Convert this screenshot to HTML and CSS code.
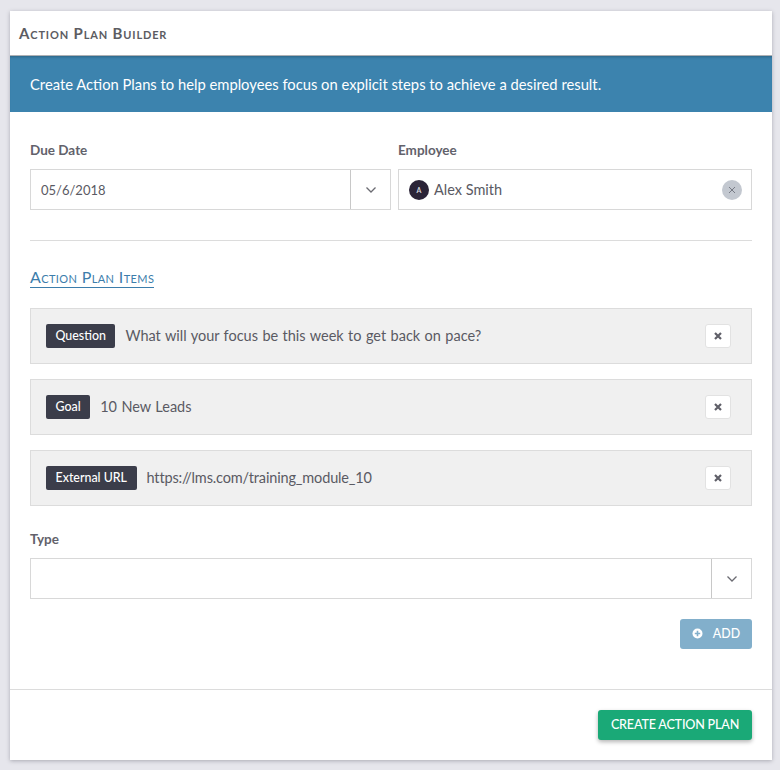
FILE: index.html
```html
<!DOCTYPE html>
<html>
  <head>
    <title>Action Plan Builder</title>
    <link rel="stylesheet" href="styles.css">
  </head>
  <body>
    <div class="card">
      <div class="card-header">Action Plan Builder</div>
      <div class="banner">Create Action Plans to help employees focus on explicit steps to achieve a desired result.</div>
      <div class="card-body">
        <div class="fields">
          <div class="field-date">
            <label class="field-label">Due Date</label>
            <div class="select-box">
              <span class="select-value">05/6/2018</span>
              <span class="select-arrow">
                <svg width="12" height="8" viewBox="0 0 12 8"><path d="M1.5 1.5 L6 6 L10.5 1.5" fill="none" stroke="#6b6b72" stroke-width="1.3"/></svg>
              </span>
            </div>
          </div>
          <div class="field-employee">
            <label class="field-label">Employee</label>
            <div class="select-box employee-box">
              <span class="avatar">A</span>
              <span class="employee-name">Alex Smith</span>
              <span class="clear-btn">
                <svg width="8" height="8" viewBox="0 0 8 8"><path d="M1 1 L7 7 M7 1 L1 7" fill="none" stroke="#777b85" stroke-width="1"/></svg>
              </span>
            </div>
          </div>
        </div>

        <hr class="divider">

        <div class="section-head"><span class="section-title">Action Plan Items</span></div>

        <div class="items">
          <div class="item">
            <span class="tag">Question</span>
            <span class="item-text">What will your focus be this week to get back on pace?</span>
            <span class="remove-btn"><svg width="8" height="8" viewBox="0 0 8 8"><path d="M1 1 L7 7 M7 1 L1 7" fill="none" stroke="#5f5f68" stroke-width="2.2"/></svg></span>
          </div>
          <div class="item">
            <span class="tag">Goal</span>
            <span class="item-text">10 New Leads</span>
            <span class="remove-btn"><svg width="8" height="8" viewBox="0 0 8 8"><path d="M1 1 L7 7 M7 1 L1 7" fill="none" stroke="#5f5f68" stroke-width="2.2"/></svg></span>
          </div>
          <div class="item">
            <span class="tag">External URL</span>
            <span class="item-text item-url">https://lms.com/training_module_10</span>
            <span class="remove-btn"><svg width="8" height="8" viewBox="0 0 8 8"><path d="M1 1 L7 7 M7 1 L1 7" fill="none" stroke="#5f5f68" stroke-width="2.2"/></svg></span>
          </div>
        </div>

        <label class="field-label type-label">Type</label>
        <div class="select-box">
          <span class="select-value"></span>
          <span class="select-arrow">
            <svg width="12" height="8" viewBox="0 0 12 8"><path d="M1.5 1.5 L6 6 L10.5 1.5" fill="none" stroke="#6b6b72" stroke-width="1.3"/></svg>
          </span>
        </div>

        <div class="add-row">
          <button class="btn-add">
            <svg width="11" height="11" viewBox="0 0 11 11"><circle cx="5.5" cy="5.5" r="5" fill="#fff"/><path d="M5.5 2.8 V8.2 M2.8 5.5 H8.2" stroke="#82afcb" stroke-width="1.6"/></svg>
            ADD
          </button>
        </div>
      </div>
      <div class="card-footer">
        <button class="btn-create">CREATE ACTION PLAN</button>
      </div>
    </div>
  </body>
</html>
```

FILE: styles.css
```css
body {
  font-family: Lato, "Open Sans", sans-serif;
  margin: 0;
  padding: 11px 8px 10px 10px;
  background-color: #e6e6ec;
  color: #5a5a63;
}
.card {
  background-color: #fff;
  box-shadow: 0px 1px 4px #a9a9b2;
}
.card-header {
  height: 44px;
  line-height: 44px;
  padding: 0 9px;
  font-size: 15px;
  font-weight: 700;
  font-variant: small-caps;
  letter-spacing: 0.85px;
  color: #5c5c62;
  border-bottom: 1px solid #aeb0b4;
}
.banner {
  height: 56px;
  line-height: 57px;
  padding: 0 20px;
  font-size: 14.75px;
  color: #fff;
  background-color: #3c83ae;
  box-shadow: inset 0 3px 3px -2px #2c6384;
}
.card-body {
  padding: 29px 20px 40px;
}
.fields {
  display: flex;
  gap: 7px;
}
.field-date {
  width: 361px;
}
.field-employee {
  width: 354px;
}
.field-label {
  display: block;
  height: 19px;
  line-height: 19px;
  margin-bottom: 9px;
  font-size: 13.5px;
  font-weight: 700;
  color: #62626b;
}
.select-box {
  display: flex;
  align-items: center;
  height: 41px;
  box-sizing: border-box;
  border: 1px solid #d8d8d8;
  font-size: 13px;
}
.select-value {
  flex: 1;
  padding-left: 10px;
}
.select-arrow {
  display: flex;
  align-items: center;
  justify-content: center;
  width: 39px;
  height: 100%;
  border-left: 1px solid #c8c8c8;
}
.employee-box {
  padding: 0 9px 0 10px;
}
.avatar {
  display: flex;
  align-items: center;
  justify-content: center;
  width: 20px;
  height: 20px;
  border-radius: 50%;
  background-color: #2b2438;
  color: #d8d8de;
  font-size: 7px;
  font-weight: 700;
}
.employee-name {
  flex: 1;
  margin-left: 5px;
  font-size: 14.5px;
}
.clear-btn {
  display: flex;
  align-items: center;
  justify-content: center;
  width: 20px;
  height: 20px;
  border-radius: 50%;
  background-color: #c3c8d0;
}
.divider {
  height: 1px;
  margin: 30px 0 0;
  border: none;
  background-color: #dcdcdc;
}
.section-head {
  margin-top: 26px;
  height: 21px;
}
.section-title {
  display: inline-block;
  height: 19px;
  line-height: 18px;
  font-size: 16px;
  font-variant: small-caps;
  letter-spacing: 0.38px;
  color: #3c7dab;
  border-bottom: 1px solid #3c7dab;
}
.items {
  display: flex;
  flex-direction: column;
  gap: 15px;
  margin-top: 20px;
}
.item {
  display: flex;
  align-items: center;
  height: 56px;
  box-sizing: border-box;
  padding: 0 20px 0 15px;
  background-color: #f0f0f0;
  border: 1px solid #dcdcdc;
}
.tag {
  height: 24px;
  line-height: 23px;
  padding: 0 9.5px;
  border-radius: 2px;
  background-color: #3b3d4a;
  color: #fff;
  font-size: 12.4px;
  font-weight: 500;
}
.item-text {
  flex: 1;
  margin-left: 10px;
  padding-bottom: 2px;
  font-size: 14.5px;
  word-spacing: 0.7px;
}
.item-url {
  letter-spacing: -0.15px;
}
.remove-btn {
  display: flex;
  align-items: center;
  justify-content: center;
  width: 24px;
  height: 22px;
  border: 1px solid #e2e2e2;
  border-radius: 3px;
  background-color: #fff;
}
.type-label {
  margin-top: 24px;
}
.add-row {
  display: flex;
  justify-content: flex-end;
  margin-top: 20px;
}
button {
  font-family: inherit;
  color: #fff;
  border: none;
  border-radius: 3px;
  height: 30px;
  font-weight: 500;
}
.btn-add {
  display: flex;
  align-items: center;
  justify-content: center;
  gap: 10px;
  width: 72px;
  padding: 0 0 1px;
  font-size: 12.4px;
  background-color: #82afcb;
}
.card-footer {
  display: flex;
  justify-content: flex-end;
  height: 71px;
  box-sizing: border-box;
  padding: 20px 20px 0;
  border-top: 1px solid #dcdcdc;
}
.btn-create {
  width: 154px;
  padding: 0 0 1px;
  font-size: 12.6px;
  letter-spacing: -0.2px;
  background-color: #1aa977;
  box-shadow: 0px 2px 4px #b5b5b5;
}
```
